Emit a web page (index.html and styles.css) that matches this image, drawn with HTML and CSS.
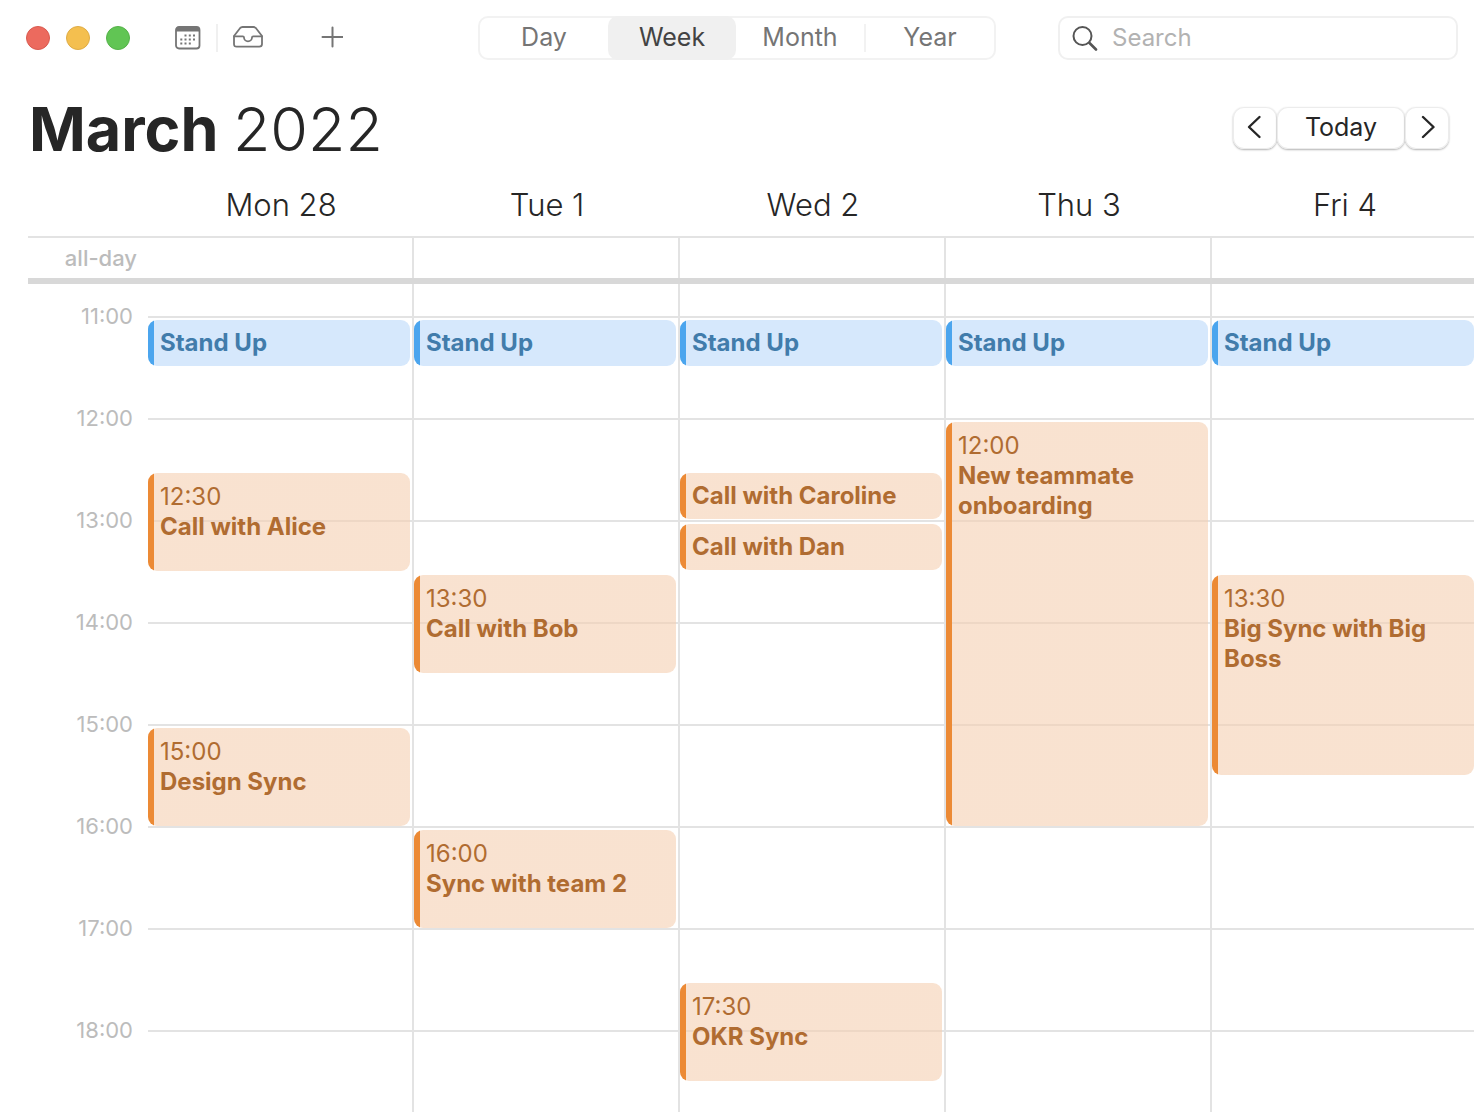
FILE: index.html
```html
<!DOCTYPE html>
<html lang="en">
<head>
    <meta charset="UTF-8">
    <meta name="viewport" content="width=device-width, initial-scale=1.0">
    <title>Calendar</title>
    <link rel="stylesheet" href="styles.css">
</head>
<body>

    <!-- Toolbar -->
    <header class="toolbar">
        <div class="toolbar-left">
            <div class="window-controls">
                <button type="button" class="dot close" aria-label="Close"></button>
                <button type="button" class="dot minimize" aria-label="Minimize"></button>
                <button type="button" class="dot zoom" aria-label="Zoom"></button>
            </div>
            <button type="button" class="icon-button calendars" aria-label="Calendars">
                <svg width="26" height="24" viewBox="0 0 26 24" fill="none">
                    <rect x="1" y="1" width="23.5" height="21.5" rx="3" stroke="#757575" stroke-width="1.8"/>
                    <path d="M1 3.5Q1 1 3.5 1h18.5Q24.500 1 24.500 3.500V5.500H1z" fill="#757575"/>
                    <path d="M9.500 8.500h2v2h-2zM13.800 8.500h2v2h-2zM18 8.500h2v2h-2zM5.300 12.500h2v2h-2zM9.500 12.500h2v2h-2zM13.800 12.500h2v2h-2zM18 12.500h2v2h-2zM5.300 16.500h2v2h-2zM9.500 16.500h2v2h-2zM13.800 16.500h2v2h-2z" fill="#757575"/>
                </svg>
            </button>
            <button type="button" class="icon-button inbox" aria-label="Inbox">
                <svg width="30" height="22" viewBox="0 0 30 22" fill="none" stroke="#757575" stroke-width="1.8" stroke-linejoin="round" stroke-linecap="round">
                    <path d="M1 10 7 2.2Q8 1 9.500 1h11Q22 1 23 2.200L29 10v8q0 2.700-2.700 2.700H3.700Q1 20.700 1 18z"/>
                    <path d="M1 10.300h8.800q1.200 0 1.200 1.200a4 3.800 0 0 0 8 0q0-1.200 1.200-1.200H29"/>
                </svg>
            </button>
            <button type="button" class="icon-button add" aria-label="New event">
                <svg width="22" height="24" viewBox="0 0 22 24" stroke="#757575" stroke-width="2" stroke-linecap="round">
                    <path d="M11.500 1.500v19M1.500 11h20"/>
                </svg>
            </button>
        </div>
        <div class="views">
            <button type="button">Day</button>
            <button type="button" class="active">Week</button>
            <button type="button">Month</button>
            <button type="button" class="divided">Year</button>
        </div>
        <label class="search">
            <svg width="26" height="26" viewBox="0 0 26 26" fill="none" stroke="#555" stroke-linecap="round">
                <circle cx="10.5" cy="11" r="9" stroke-width="2"/>
                <path d="M17.5 18 24 24.500" stroke-width="2.6"/>
            </svg>
            <input type="search" placeholder="Search" aria-label="Search">
        </label>
    </header>

    <!-- Month title -->
    <div class="heading">
        <h1>March <span>2022</span></h1>
        <div class="pager">
            <button type="button" aria-label="Previous week">
                <svg width="16" height="24" viewBox="0 0 16 24"><path d="M12.500 2 2 12l10.500 10"/></svg>
            </button>
            <button type="button" class="today">Today</button>
            <button type="button" aria-label="Next week">
                <svg width="16" height="24" viewBox="0 0 16 24"><path d="m4 2 10.500 10L4 22"/></svg>
            </button>
        </div>
    </div>

    <!-- Week -->
    <main class="week">
        <div class="week-row day-names">
            <div></div>
            <h2>Mon 28</h2>
            <h2>Tue 1</h2>
            <h2>Wed 2</h2>
            <h2>Thu 3</h2>
            <h2>Fri 4</h2>
        </div>
        <div class="week-row all-day">
            <div class="all-day-label">all-day</div>
            <div></div>
            <div></div>
            <div></div>
            <div></div>
            <div></div>
        </div>
        <div class="week-row hours">
            <div class="times">
                <div>11:00</div>
                <div>12:00</div>
                <div>13:00</div>
                <div>14:00</div>
                <div>15:00</div>
                <div>16:00</div>
                <div>17:00</div>
                <div>18:00</div>
            </div>
            <div class="day">
                <div class="event blue at-1100 half"><b>Stand Up</b></div>
                <div class="event at-1230 one"><time>12:30</time><b>Call with Alice</b></div>
                <div class="event at-1500 one"><time>15:00</time><b>Design Sync</b></div>
            </div>
            <div class="day">
                <div class="event blue at-1100 half"><b>Stand Up</b></div>
                <div class="event at-1330 one"><time>13:30</time><b>Call with Bob</b></div>
                <div class="event at-1600 one"><time>16:00</time><b>Sync with team 2</b></div>
            </div>
            <div class="day">
                <div class="event blue at-1100 half"><b>Stand Up</b></div>
                <div class="event at-1230 half"><b>Call with Caroline</b></div>
                <div class="event at-1300 half"><b>Call with Dan</b></div>
                <div class="event at-1730 one"><time>17:30</time><b>OKR Sync</b></div>
            </div>
            <div class="day">
                <div class="event blue at-1100 half"><b>Stand Up</b></div>
                <div class="event at-1200 four"><time>12:00</time><b>New teammate onboarding</b></div>
            </div>
            <div class="day">
                <div class="event blue at-1100 half"><b>Stand Up</b></div>
                <div class="event at-1330 two"><time>13:30</time><b>Big Sync with Big Boss</b></div>
            </div>
        </div>
    </main>

</body>
</html>
```

FILE: styles.css
```css
* {
    box-sizing: border-box;
}

body {
    display: flex;
    flex-direction: column;
    height: 100vh;
    margin: 0;
    overflow: hidden;
    background: #fff;
    color: #262626;
    font-family: Inter, "Liberation Sans", sans-serif;
}

button {
    margin: 0;
    padding: 0;
    border: none;
    background: none;
    color: inherit;
    font: inherit;
    cursor: pointer;
}

svg {
    display: block;
}

/* Toolbar */
.toolbar {
    display: flex;
    align-items: center;
    height: 76px;
    padding: 0 16px 0 26px;
}

.toolbar-left {
    display: flex;
    flex: 1;
    align-items: center;
}

.window-controls {
    display: flex;
    gap: 16px;
    margin-right: 45px;
}

.dot {
    width: 24px;
    height: 24px;
    border: 1px solid #d95a4f;
    border-radius: 50%;
    background: #ec6a5e;
}

.dot.minimize {
    border-color: #dfac45;
    background: #f4bf4f;
}

.dot.zoom {
    border-color: #55b249;
    background: #61c554;
}

.icon-button.inbox {
    margin-left: 15px;
    padding: 2px 0 4px 15px;
    border-left: 2px solid #f0f0f0;
}

.icon-button.add {
    margin-left: 58px;
}

.views {
    display: flex;
    width: 518px;
    height: 44px;
    border: 2px solid #f2f2f2;
    border-radius: 10px;
    color: #757575;
    font-size: 25px;
    line-height: 26px;
}

.views button {
    flex: 1;
    padding-bottom: 2px;
}

.views .active {
    margin: -2px 0;
    border-radius: 10px;
    background: #f0f0f0;
    color: #434343;
}

.views .divided {
    margin: 6px 0;
    border-left: 2px solid #f2f2f2;
}

.search {
    display: flex;
    align-items: center;
    gap: 14px;
    width: 400px;
    height: 44px;
    margin-left: 62px;
    padding: 0 12px;
    border: 2px solid #f0f0f0;
    border-radius: 10px;
}

.search input {
    flex: 1;
    min-width: 0;
    padding: 0 0 2px;
    border: none;
    outline: none;
    background: none;
    font: inherit;
    font-size: 24px;
}

.search input::placeholder {
    color: #b2b2b2;
}

/* Month title */
.heading {
    display: flex;
    align-items: center;
    justify-content: space-between;
    height: 104px;
    padding: 0 25px 0 29px;
}

h1 {
    margin: 0;
    padding-top: 2px;
    font-size: 61px;
    font-weight: 700;
    line-height: 72px;
}

h1 span {
    font-weight: 300;
}

.pager {
    display: flex;
    font-size: 25px;
}

.pager button {
    display: flex;
    align-items: center;
    justify-content: center;
    width: 44px;
    height: 42px;
    padding-bottom: 2px;
    border-radius: 11px;
    background: #fff;
    box-shadow: inset 0 0 0 1px #ececec, 0 1px 2px rgba(0, 0, 0, 0.3);
}

.pager .today {
    width: 128px;
}

.pager path {
    fill: none;
    stroke: #262626;
    stroke-width: 2.4;
    stroke-linecap: round;
    stroke-linejoin: round;
}

/* Week grid */
.week {
    display: flex;
    flex: 1;
    flex-direction: column;
    min-height: 0;
    margin: 0 -4px 0 28px;
}

.week-row {
    display: grid;
    grid-template-columns: 120px repeat(5, minmax(0, 1fr));
}

.day-names {
    height: 56px;
}

h2 {
    margin: 0;
    font-size: 31px;
    font-weight: 300;
    line-height: 50px;
    text-align: center;
}

.all-day {
    height: 48px;
    border-top: 2px solid #e3e3e3;
    border-bottom: 6px solid #d8d8d8;
}

.all-day > div + div,
.day {
    border-right: 2px solid #e3e3e3;
}

.all-day-label {
    padding-right: 11px;
    color: #bcbcbc;
    font-size: 22px;
    font-weight: 500;
    line-height: 40px;
    text-align: right;
}

.hours {
    flex: 1;
    min-height: 0;
    overflow: hidden;
}

.times {
    padding: 17px 15px 0 0;
    color: #bcbcbc;
    font-size: 22px;
    text-align: right;
}

.times div {
    height: 102px;
    line-height: 30px;
}

/* One row per half hour, starting at 11:00 */
.day {
    display: grid;
    grid-template-rows: repeat(16, 51px);
    align-content: start;
    padding: 32px 2px 0 0;
    background: repeating-linear-gradient(#e3e3e3 0 2px, transparent 2px 102px) 0 32px no-repeat;
}

.event {
    display: flex;
    flex-direction: column;
    margin-top: 4px;
    padding: 9px 6px 9px 12px;
    border-radius: 9px;
    background: linear-gradient(90deg, #ec8a35 6px, rgba(245, 207, 177, 0.6) 6px);
    color: #b06c31;
    font-size: 24px;
    line-height: 30px;
}

.event.half {
    padding-top: 8px;
    margin-bottom: 1px;
}

.event.blue {
    background: linear-gradient(90deg, #4ba5ee 6px, #d6e8fc 6px);
    color: #417cab;
}

.at-1100 { grid-row-start: 1; }
.at-1200 { grid-row-start: 3; }
.at-1230 { grid-row-start: 4; }
.at-1300 { grid-row-start: 5; }
.at-1330 { grid-row-start: 6; }
.at-1500 { grid-row-start: 9; }
.at-1600 { grid-row-start: 11; }
.at-1730 { grid-row-start: 14; }

.one { grid-row-end: span 2; }
.two { grid-row-end: span 4; }
.four { grid-row-end: span 8; }
```
